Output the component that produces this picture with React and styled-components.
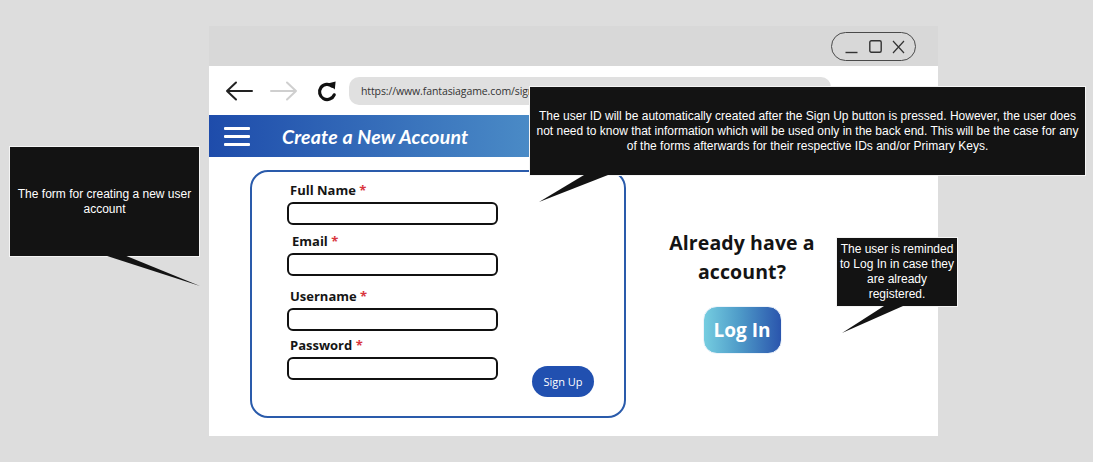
import React from "react";
import styled, { createGlobalStyle } from "styled-components";

const Global = createGlobalStyle`
  html, body { margin: 0; padding: 0; background: #dddddd; }
  * { box-sizing: border-box; }
`;

const Page = styled.div`
  position: relative;
  width: 1093px;
  height: 462px;
  overflow: hidden;
  background: #dddddd;
  padding: 26px 0 0 209px;
  font-family: "Open Sans", "Liberation Sans", sans-serif;
`;

const Window = styled.div`
  width: 729px;
  height: 410px;
  background: #ffffff;
  display: flex;
  flex-direction: column;
`;

const TitleBar = styled.div`
  height: 40px;
  background: #d8d8d8;
  display: flex;
  justify-content: flex-end;
  align-items: flex-start;
  padding: 6px 22px 0 0;
`;

const Controls = styled.div`
  width: 85px;
  height: 29px;
  border: 1.5px solid #4a4a4a;
  border-radius: 15px;
  display: flex;
  align-items: center;
  justify-content: space-between;
  padding: 0 10px 0 13px;
`;

const NavRow = styled.div`
  height: 49px;
  display: flex;
  align-items: center;
  padding-left: 16px;
`;

const NavIcon = styled.span`
  display: flex;
  align-items: center;
  margin-right: ${(p) => p.$gap}px;
`;

const UrlBar = styled.div`
  width: 482px;
  height: 28px;
  border-radius: 10px;
  background: #e0e0e0;
  display: flex;
  align-items: center;
  padding-left: 12px;
  font-size: 10.5px;
  color: #333;
  font-family: "Open Sans", sans-serif;
  letter-spacing: -0.1px;
`;

const Header = styled.div`
  height: 42px;
  background: linear-gradient(90deg, #1e4cab 0%, #4b8cc7 45%, #6aaad6 100%);
  display: flex;
  align-items: center;
  padding-left: 15px;
`;

const Burger = styled.div`
  width: 26px;
  display: flex;
  flex-direction: column;
  gap: 5px;
  margin-right: 32px;
  span {
    display: block;
    height: 3px;
    background: #fff;
    border-radius: 1px;
  }
`;

const Title = styled.h1`
  margin: 0;
  color: #fff;
  font-family: "Lato", "Open Sans", sans-serif;
  font-style: italic;
  font-weight: 700;
  font-size: 19.5px;
  letter-spacing: 0.2px;
`;

const Content = styled.div`
  flex: 1;
  display: flex;
  padding: 13px 0 0 41px;
`;

const Card = styled.form`
  width: 376px;
  height: 248px;
  border: 2px solid #2a5bab;
  border-radius: 18px;
  display: flex;
  align-items: flex-end;
  padding: 0 0 19px 35px;
`;

const Fields = styled.div`
  display: flex;
  flex-direction: column;
  align-self: flex-start;
  padding-top: 11px;
`;

const Label = styled.label`
  font-size: 13px;
  font-weight: 700;
  color: #151515;
  line-height: 14px;
  margin: ${(p) => p.$top}px 0 5px ${(p) => p.$indent}px;
  span { color: #d9363e; }
`;

const Input = styled.div`
  width: 211px;
  height: 23px;
  border: 2px solid #111;
  border-radius: 6px;
  background: #fff;
`;

const SignUp = styled.button`
  margin-left: 34px;
  width: 62px;
  height: 31px;
  border: none;
  border-radius: 16px;
  background: #2150b0;
  color: #fff;
  font-family: "Open Sans", sans-serif;
  font-size: 11px;
  padding: 0;
`;

const Side = styled.div`
  width: 192px;
  margin-left: 20px;
  padding-top: 58px;
  display: flex;
  flex-direction: column;
  align-items: center;
`;

const Question = styled.h2`
  margin: 0;
  text-align: center;
  font-size: 19.5px;
  font-weight: 700;
  line-height: 29px;
  color: #141414;
  letter-spacing: 0.1px;
`;

const LogIn = styled.button`
  margin-top: 20px;
  width: 79px;
  height: 48px;
  border: 1px solid #eef4fb;
  border-radius: 14px;
  background: linear-gradient(90deg, #75cde0 0%, #4f9cc9 45%, #2a55ad 100%);
  color: #fff;
  font-family: "Open Sans", sans-serif;
  font-weight: 700;
  font-size: 19px;
  padding: 0;
`;

const Callout = styled.div`
  position: absolute;
  left: ${(p) => p.$x}px;
  top: ${(p) => p.$y}px;
  width: ${(p) => p.$w}px;
  height: ${(p) => p.$h}px;
  background: #131313;
  border: 1px solid #f4f4f4;
  color: #fff;
  font-family: "Liberation Sans", Arial, sans-serif;
  font-size: 12px;
  line-height: 15px;
  text-align: center;
  display: flex;
  flex-direction: column;
  align-items: center;
  justify-content: center;
  white-space: nowrap;
  z-index: 2;
`;

const Tails = styled.svg`
  position: absolute;
  left: 0;
  top: 0;
  pointer-events: none;
  z-index: 3;
`;

const BackArrow = ({ color }) => (
  <svg width="28" height="20" viewBox="0 0 28 20">
    <path d="M27 10 H2 M11 1.5 L2 10 L11 18.5" fill="none" stroke={color} strokeWidth="2" strokeLinecap="round" strokeLinejoin="round" />
  </svg>
);

const FwdArrow = ({ color }) => (
  <svg width="28" height="20" viewBox="0 0 28 20">
    <path d="M1 10 H26 M17 1.5 L26 10 L17 18.5" fill="none" stroke={color} strokeWidth="2" strokeLinecap="round" strokeLinejoin="round" />
  </svg>
);

const Reload = () => (
  <svg width="24" height="24" viewBox="0 0 24 24">
    <path d="M17.2 7.2 A7.6 7.6 0 1 0 19.2 15.8" fill="none" stroke="#111" strokeWidth="3.2" strokeLinecap="round" />
    <polygon points="12.8,4.6 20.6,2.4 19.8,10.6" fill="#111" />
  </svg>
);

const WinIcons = () => (
  <>
    <svg width="13" height="14" viewBox="0 0 13 14">
      <path d="M0.5 12.5 H12.5" stroke="#333" strokeWidth="1.4" />
    </svg>
    <svg width="13" height="14" viewBox="0 0 13 14">
      <rect x="0.8" y="0.8" width="11.4" height="11.4" rx="1.5" fill="none" stroke="#333" strokeWidth="1.4" />
    </svg>
    <svg width="13" height="14" viewBox="0 0 13 14">
      <path d="M1 1 L12 13 M12 1 L1 13" stroke="#333" strokeWidth="1.2" />
    </svg>
  </>
);

const fields = [
  { name: "Full Name", top: 0, indent: 3 },
  { name: "Email", top: 9, indent: 5 },
  { name: "Username", top: 13, indent: 3 },
  { name: "Password", top: 7, indent: 3 },
];

export default function App() {
  return (
    <>
      <Global />
      <Page>
        <Window>
          <TitleBar>
            <Controls>
              <WinIcons />
            </Controls>
          </TitleBar>
          <NavRow>
            <NavIcon $gap={17}><BackArrow color="#222" /></NavIcon>
            <NavIcon $gap={17}><FwdArrow color="#cfcfcf" /></NavIcon>
            <NavIcon $gap={10}><Reload /></NavIcon>
            <UrlBar>https://www.fantasiagame.com/signup</UrlBar>
          </NavRow>
          <Header>
            <Burger><span /><span /><span /></Burger>
            <Title>Create a New Account</Title>
          </Header>
          <Content>
            <Card onSubmit={(e) => e.preventDefault()}>
              <Fields>
                {fields.map((f) => (
                  <React.Fragment key={f.name}>
                    <Label $top={f.top} $indent={f.indent}>
                      {f.name} <span>*</span>
                    </Label>
                    <Input />
                  </React.Fragment>
                ))}
              </Fields>
              <SignUp type="button">Sign Up</SignUp>
            </Card>
            <Side>
              <Question>
                Already have a<br />account?
              </Question>
              <LogIn type="button">Log In</LogIn>
            </Side>
          </Content>
        </Window>

        <Callout $x={9} $y={146} $w={191} $h={111}>
          <div>The form for creating a new user</div>
          <div>account</div>
        </Callout>
        <Callout $x={529} $y={86} $w={557} $h={90}>
          <div>The user ID will be automatically created after the Sign Up button is pressed. However, the user does</div>
          <div>not need to know that information which will be used only in the back end. This will be the case for any</div>
          <div>of the forms afterwards for their respective IDs and/or Primary Keys.</div>
        </Callout>
        <Callout $x={836} $y={237} $w={122} $h={70}>
          <div>The user is reminded</div>
          <div>to Log In in case they</div>
          <div>are already</div>
          <div>registered.</div>
        </Callout>

        <Tails width="1093" height="462" viewBox="0 0 1093 462">
          <polygon points="104,255 124,255 200,286" fill="#131313" />
          <polygon points="584,175 608,175 539,202" fill="#131313" />
          <polygon points="884,306 903,306 842,333" fill="#131313" />
        </Tails>
      </Page>
    </>
  );
}
